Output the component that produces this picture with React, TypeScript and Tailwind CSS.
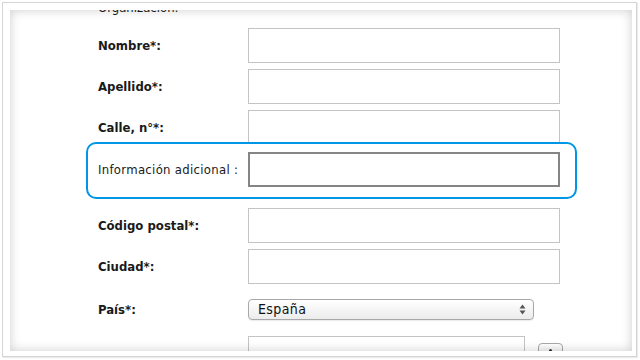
import React from "react";

const font = "font-['DejaVu_Sans_Condensed','DejaVu_Sans',sans-serif]";

type FieldProps = { label: string };

const Field: React.FC<FieldProps> = ({ label }) => (
  <div className="flex items-center pl-[88px] h-[35px]">
    <span className="w-[150px] text-[13px] font-bold text-[#1a1a1a]">{label}</span>
    <div className="w-[312px] h-[35px] border border-[#c4c4c4] bg-white" />
  </div>
);

const SelectArrows = () => (
  <svg width="7" height="11" viewBox="0 0 7 11">
    <path d="M3.5 0.5 L6.5 4.5 L0.5 4.5 Z" fill="#555" />
    <path d="M3.5 10.5 L6.5 6.5 L0.5 6.5 Z" fill="#555" />
  </svg>
);

export default function App() {
  return (
    <div className={`w-[640px] h-[360px] bg-white pt-[2px] pl-[2px] pr-[3px] pb-[3px] ${font}`}>
      <div className="w-full h-full border border-[#d4d4d4] shadow-[1px_1px_1px_rgba(0,0,0,0.08)] bg-white pt-[7px] pl-[7px] pr-[4px] pb-[5px]">
        <div className="relative w-full h-full overflow-hidden bg-white">
          <div className="flex flex-col">
            {/* section label, scrolled mostly out of view */}
            <div className="pl-[88px] mt-[-11px] h-[18px] text-[13px] leading-[18px] text-[#1a1a1a]">
              Organización:
            </div>

            <div className="flex flex-col gap-[6px] mt-[11px]">
              <Field label="Nombre*:" />
              <Field label="Apellido*:" />
              <Field label="Calle, n°*:" />
            </div>

            {/* highlighted row */}
            <div className="relative mt-[-3px] ml-[76px] w-[491px] h-[57px] border-2 border-[#0096e6] rounded-[10px] bg-white pl-[10px] pt-[8px] pb-[10px] flex items-center">
              <span className="w-[150px] text-[13px] text-[#1a1a1a] tracking-[0.3px]">
                Información adicional :
              </span>
              <div className="w-[312px] h-[35px] border-2 border-[#858585] bg-white" />
            </div>

            <div className="flex flex-col gap-[6px] mt-[9px]">
              <Field label="Código postal*:" />
              <Field label="Ciudad*:" />
            </div>

            <div className="flex items-center pl-[88px] h-[35px] mt-[8px]">
              <span className="w-[150px] text-[13px] font-bold text-[#1a1a1a]">País*:</span>
              <div className="w-[286px] h-[21px] rounded-[4px] border border-[#a8a8a8] bg-gradient-to-b from-white to-[#ececec] flex items-center justify-between pl-[9px] pr-[7px] shadow-[0_1px_1px_rgba(0,0,0,0.08)]">
                <span className="text-[14px] text-[#111] tracking-[0.4px]">España</span>
                <SelectArrows />
              </div>
            </div>

            <div className="flex pl-[88px] mt-[9px]">
              <span className="w-[150px] pt-[11px] text-[13px] font-bold text-[#1a1a1a]">NIF/VAT:</span>
              <div className="w-[277px] h-[35px] border border-[#c4c4c4] bg-white" />
              <div className="ml-[13px] mt-[7px] w-[25px] h-[20px] rounded-[4px] border border-[#a8a8a8] bg-gradient-to-b from-white to-[#e6e6e6] flex justify-center pt-[5px]">
                <span className="w-[3px] h-[3px] rounded-full bg-[#333]" />
              </div>
            </div>
          </div>

          {/* inset shadow of the viewport */}
          <div className="pointer-events-none absolute inset-0 shadow-[inset_0_0_11px_rgba(0,0,0,0.2)]" />
        </div>
      </div>
    </div>
  );
}
